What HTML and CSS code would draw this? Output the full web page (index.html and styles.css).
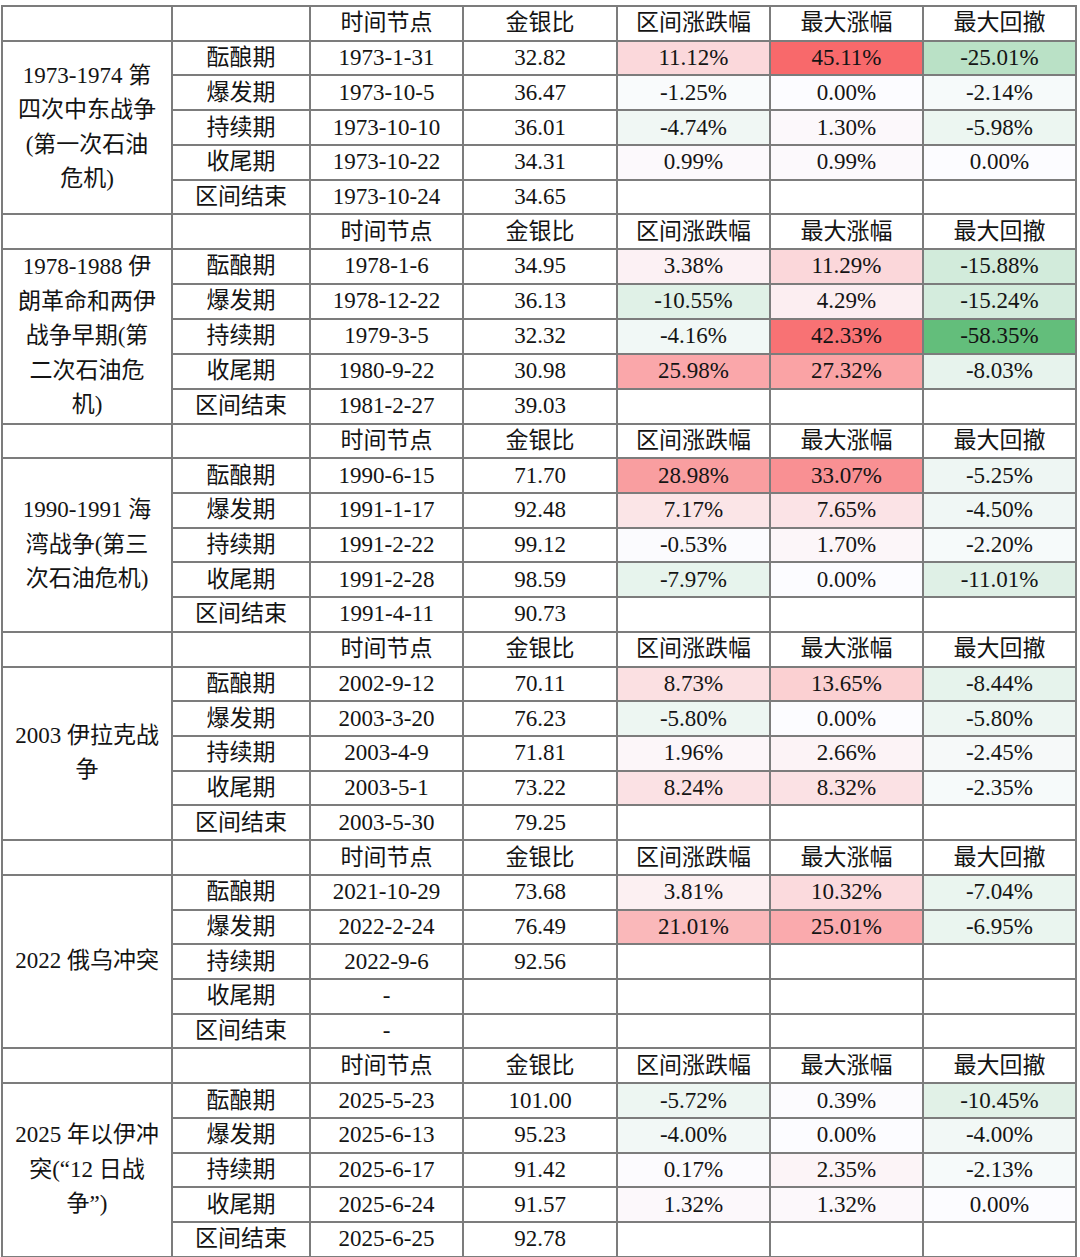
FILE: index.html
```html
<!DOCTYPE html>
<html lang="zh-CN">
<head>
<meta charset="utf-8">
<title>金银比</title>
<link rel="stylesheet" href="styles.css">
<script src="script.js" defer></script>
</head>
<body>
<div class="page">
<table class="grid">
<colgroup>
<col class="c-event"><col class="c-phase"><col class="c-date"><col class="c-ratio"><col class="c-pct"><col class="c-pct"><col class="c-pct">
</colgroup>
<tbody>
<tr class="head"><td></td><td></td><td>时间节点</td><td>金银比</td><td>区间涨跌幅</td><td>最大涨幅</td><td>最大回撤</td></tr>
<tr><td class="event" rowspan="5">1973-1974 第<br>四次中东战争<br>(第一次石油<br>危机)</td><td>酝酿期</td><td>1973-1-31</td><td>32.82</td><td class="h">11.12%</td><td class="h">45.11%</td><td class="h">-25.01%</td></tr>
<tr><td>爆发期</td><td>1973-10-5</td><td>36.47</td><td class="h">-1.25%</td><td class="h">0.00%</td><td class="h">-2.14%</td></tr>
<tr><td>持续期</td><td>1973-10-10</td><td>36.01</td><td class="h">-4.74%</td><td class="h">1.30%</td><td class="h">-5.98%</td></tr>
<tr><td>收尾期</td><td>1973-10-22</td><td>34.31</td><td class="h">0.99%</td><td class="h">0.99%</td><td class="h">0.00%</td></tr>
<tr><td>区间结束</td><td>1973-10-24</td><td>34.65</td><td></td><td></td><td></td></tr>

<tr class="head"><td></td><td></td><td>时间节点</td><td>金银比</td><td>区间涨跌幅</td><td>最大涨幅</td><td>最大回撤</td></tr>
<tr><td class="event" rowspan="5">1978-1988 伊<br>朗革命和两伊<br>战争早期(第<br>二次石油危<br>机)</td><td>酝酿期</td><td>1978-1-6</td><td>34.95</td><td class="h">3.38%</td><td class="h">11.29%</td><td class="h">-15.88%</td></tr>
<tr><td>爆发期</td><td>1978-12-22</td><td>36.13</td><td class="h">-10.55%</td><td class="h">4.29%</td><td class="h">-15.24%</td></tr>
<tr><td>持续期</td><td>1979-3-5</td><td>32.32</td><td class="h">-4.16%</td><td class="h">42.33%</td><td class="h">-58.35%</td></tr>
<tr><td>收尾期</td><td>1980-9-22</td><td>30.98</td><td class="h">25.98%</td><td class="h">27.32%</td><td class="h">-8.03%</td></tr>
<tr><td>区间结束</td><td>1981-2-27</td><td>39.03</td><td></td><td></td><td></td></tr>

<tr class="head"><td></td><td></td><td>时间节点</td><td>金银比</td><td>区间涨跌幅</td><td>最大涨幅</td><td>最大回撤</td></tr>
<tr><td class="event" rowspan="5">1990-1991 海<br>湾战争(第三<br>次石油危机)</td><td>酝酿期</td><td>1990-6-15</td><td>71.70</td><td class="h">28.98%</td><td class="h">33.07%</td><td class="h">-5.25%</td></tr>
<tr><td>爆发期</td><td>1991-1-17</td><td>92.48</td><td class="h">7.17%</td><td class="h">7.65%</td><td class="h">-4.50%</td></tr>
<tr><td>持续期</td><td>1991-2-22</td><td>99.12</td><td class="h">-0.53%</td><td class="h">1.70%</td><td class="h">-2.20%</td></tr>
<tr><td>收尾期</td><td>1991-2-28</td><td>98.59</td><td class="h">-7.97%</td><td class="h">0.00%</td><td class="h">-11.01%</td></tr>
<tr><td>区间结束</td><td>1991-4-11</td><td>90.73</td><td></td><td></td><td></td></tr>

<tr class="head"><td></td><td></td><td>时间节点</td><td>金银比</td><td>区间涨跌幅</td><td>最大涨幅</td><td>最大回撤</td></tr>
<tr><td class="event" rowspan="5">2003 伊拉克战<br>争</td><td>酝酿期</td><td>2002-9-12</td><td>70.11</td><td class="h">8.73%</td><td class="h">13.65%</td><td class="h">-8.44%</td></tr>
<tr><td>爆发期</td><td>2003-3-20</td><td>76.23</td><td class="h">-5.80%</td><td class="h">0.00%</td><td class="h">-5.80%</td></tr>
<tr><td>持续期</td><td>2003-4-9</td><td>71.81</td><td class="h">1.96%</td><td class="h">2.66%</td><td class="h">-2.45%</td></tr>
<tr><td>收尾期</td><td>2003-5-1</td><td>73.22</td><td class="h">8.24%</td><td class="h">8.32%</td><td class="h">-2.35%</td></tr>
<tr><td>区间结束</td><td>2003-5-30</td><td>79.25</td><td></td><td></td><td></td></tr>

<tr class="head"><td></td><td></td><td>时间节点</td><td>金银比</td><td>区间涨跌幅</td><td>最大涨幅</td><td>最大回撤</td></tr>
<tr><td class="event" rowspan="5">2022 俄乌冲突</td><td>酝酿期</td><td>2021-10-29</td><td>73.68</td><td class="h">3.81%</td><td class="h">10.32%</td><td class="h">-7.04%</td></tr>
<tr><td>爆发期</td><td>2022-2-24</td><td>76.49</td><td class="h">21.01%</td><td class="h">25.01%</td><td class="h">-6.95%</td></tr>
<tr><td>持续期</td><td>2022-9-6</td><td>92.56</td><td></td><td></td><td></td></tr>
<tr><td>收尾期</td><td>-</td><td></td><td></td><td></td><td></td></tr>
<tr><td>区间结束</td><td>-</td><td></td><td></td><td></td><td></td></tr>

<tr class="head"><td></td><td></td><td>时间节点</td><td>金银比</td><td>区间涨跌幅</td><td>最大涨幅</td><td>最大回撤</td></tr>
<tr><td class="event" rowspan="5">2025 年以伊冲<br>突(“12 日战<br>争”)</td><td>酝酿期</td><td>2025-5-23</td><td>101.00</td><td class="h">-5.72%</td><td class="h">0.39%</td><td class="h">-10.45%</td></tr>
<tr><td>爆发期</td><td>2025-6-13</td><td>95.23</td><td class="h">-4.00%</td><td class="h">0.00%</td><td class="h">-4.00%</td></tr>
<tr><td>持续期</td><td>2025-6-17</td><td>91.42</td><td class="h">0.17%</td><td class="h">2.35%</td><td class="h">-2.13%</td></tr>
<tr><td>收尾期</td><td>2025-6-24</td><td>91.57</td><td class="h">1.32%</td><td class="h">1.32%</td><td class="h">0.00%</td></tr>
<tr><td>区间结束</td><td>2025-6-25</td><td>92.78</td><td></td><td></td><td></td></tr>
</tbody>
</table>
</div>
</body>
</html>
```

FILE: styles.css
```css
html, body {
  margin: 0;
  padding: 0;
  background: #ffffff;
}

.page {
  padding: 5px 0 0 1px;
}

.grid {
  border-collapse: collapse;
  table-layout: fixed;
  width: 1076px;
  font-family: "Liberation Serif", "Noto Sans CJK SC", serif;
  font-size: 23px;
  color: #141414;
}

.c-event { width: 170px; }
.c-phase { width: 138px; }
.c-date { width: 153px; }
.c-ratio { width: 154px; }
.c-pct { width: 153px; }

.grid tr {
  height: 34.72px;
}

.grid td {
  border: 2px solid #7c7c7c;
  padding: 0;
  text-align: center;
  vertical-align: middle;
  line-height: 26px;
  white-space: nowrap;
  overflow: hidden;
}

.grid td.event {
  line-height: 34.5px;
  white-space: normal;
}
```

FILE: script.js
```js
(function () {
  var cells = document.querySelectorAll('.grid td.h');
  var vals = [];
  cells.forEach(function (c) { vals.push(parseFloat(c.textContent)); });
  var max = Math.max.apply(null, vals);
  var min = Math.min.apply(null, vals);
  var mid = [252, 252, 255];
  var red = [248, 105, 107];
  var green = [99, 190, 123];
  cells.forEach(function (c, i) {
    var v = vals[i];
    var target, t;
    if (v >= 0) { target = red; t = max ? v / max : 0; }
    else { target = green; t = min ? v / min : 0; }
    var rgb = mid.map(function (m, k) { return Math.round(m + (target[k] - m) * t); });
    c.style.backgroundColor = 'rgb(' + rgb.join(',') + ')';
  });
})();
```
